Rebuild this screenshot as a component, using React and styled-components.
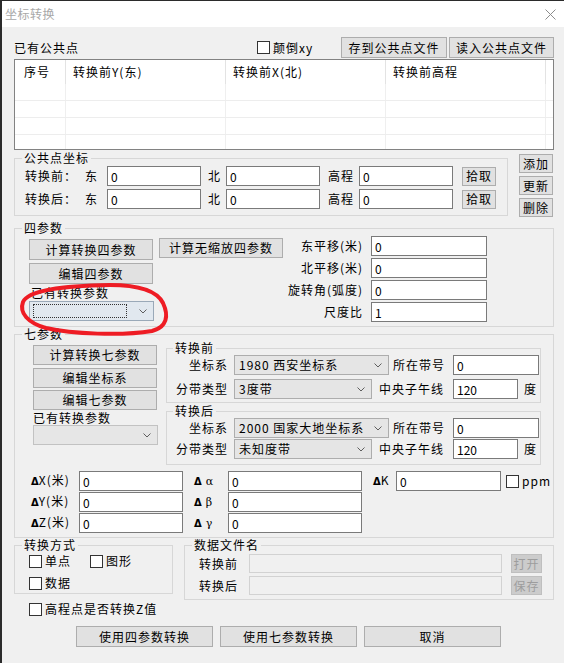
import React from "react";
import styled, { createGlobalStyle } from "styled-components";

const GlobalStyle = createGlobalStyle`
  html, body { margin: 0; padding: 0; background: #f0f0f0; }
  body {
    font-family: "Noto Sans CJK SC", "Noto Sans", sans-serif;
    font-size: 12px;
    line-height: 14px;
    letter-spacing: 1px;
    color: #000;
  }
  * { box-sizing: border-box; }
`;

const Window = styled.div`
  position: relative;
  width: 564px;
  height: 663px;
  background: #f0f0f0;
  border-top: 1px solid #2b2b2b;
  border-left: 2px solid #2b2b2b;
  overflow: hidden;
`;

const TitleBar = styled.div`
  height: 26px;
  background: #fff;
  display: flex;
  align-items: center;
  justify-content: space-between;
  padding: 0 8px 0 3px;
`;

const Title = styled.span`
  color: #a8a8a8;
  letter-spacing: 0.5px;
`;

const Body = styled.div`
  padding: 10px 10px 0 12px;
`;

const Row = styled.div`
  display: flex;
  align-items: center;
  height: ${(p) => p.$h || 20}px;
  margin-top: ${(p) => p.$mt || 0}px;
  padding-left: ${(p) => p.$pl || 0}px;
`;

const Cap = styled.span`
  flex: none;
  display: inline-block;
  width: ${(p) => (p.$w ? `${p.$w}px` : "auto")};
  margin-left: ${(p) => p.$ml || 0}px;
  text-align: ${(p) => (p.$right ? "right" : "left")};
  white-space: nowrap;
`;

const Button = styled.button`
  flex: none;
  width: ${(p) => p.$w}px;
  height: ${(p) => p.$h || 20}px;
  margin: ${(p) => p.$mt || 0}px 0 0 ${(p) => p.$ml || 0}px;
  padding: 0;
  font: inherit;
  letter-spacing: inherit;
  color: #000;
  background: #e1e1e1;
  border: 1px solid #adadad;
  &:disabled {
    background: #cccccc;
    border-color: #bfbfbf;
    color: #9d9d9d;
  }
`;

const Edit = styled.input`
  flex: none;
  width: ${(p) => p.$w}px;
  height: ${(p) => p.$h || 20}px;
  margin: 0 0 0 ${(p) => p.$ml || 0}px;
  padding: 0 3px;
  font: inherit;
  letter-spacing: 0;
  color: #000;
  background: #fff;
  border: 1px solid #7a7a7a;
  outline: none;
  &:disabled {
    background: #f0f0f0;
    border-color: #d2d2d2;
  }
`;

const ComboBox = styled.div`
  flex: none;
  width: ${(p) => p.$w}px;
  height: 20px;
  margin-left: ${(p) => p.$ml || 0}px;
  display: flex;
  align-items: center;
  justify-content: space-between;
  padding: 0 6px 0 ${(p) => (p.$focus ? 3 : 4)}px;
  background: ${(p) => (p.$focus ? "#e1e8ef" : p.$dim ? "#e6e6e6" : "#e5e5e5")};
  border: 1px solid ${(p) => (p.$focus ? "#9aa9b8" : p.$dim ? "#c2c2c2" : "#adadad")};
  white-space: nowrap;
  overflow: hidden;
`;

const FocusRing = styled.span`
  flex: 1;
  height: 14px;
  margin-right: 12px;
  border: 1px dotted #333;
`;

const CheckItem = styled.span`
  flex: none;
  display: inline-flex;
  align-items: center;
  width: ${(p) => (p.$w ? `${p.$w}px` : "auto")};
  margin-left: ${(p) => p.$ml || 0}px;
  white-space: nowrap;
`;

const CheckBox = styled.span`
  flex: none;
  width: 13px;
  height: 13px;
  margin-right: 3px;
  background: #fff;
  border: 1px solid #333;
`;

const Group = styled.fieldset`
  flex: none;
  margin: ${(p) => p.$mt || 0}px 0 0 ${(p) => p.$ml || 0}px;
  padding: 0;
  min-width: 0;
  width: ${(p) => p.$w}px;
  border: 1px solid #d7d7d7;
`;

const Legend = styled.legend`
  margin-left: ${(p) => p.$ml ?? 7}px;
  padding: 0 2px;
  height: 14px;
  line-height: 14px;
`;

/* table of common points */
const PointTable = styled.div`
  margin-top: 1px;
  width: 540px;
  height: 91px;
  background: #fff;
  border: 1px solid #828282;
  display: flex;
  flex-direction: column;
`;

const TableRow = styled.div`
  display: grid;
  grid-template-columns: 51px 160px 160px 160px 1fr;
  height: ${(p) => (p.$h ? `${p.$h}px` : "auto")};
  flex: ${(p) => (p.$h ? "none" : 1)};
  border-bottom: ${(p) => (p.$line ? "1px solid #ededed" : "none")};
`;

const TCell = styled.div`
  display: flex;
  align-items: center;
  padding-left: ${(p) => p.$pad ?? 7}px;
  border-right: 1px solid ${(p) => (p.$head ? "#e3e3e3" : "#efefef")};
  white-space: nowrap;
  &:last-child { border-right: none; }
`;

const PubRow = styled.div`
  display: flex;
  align-items: flex-start;
  margin-top: 1px;
`;

const PubInner = styled.div`
  display: flex;
  flex-direction: column;
  gap: 3px;
  padding: 1px 0 6px 10px;
`;

const SideButtons = styled.div`
  display: flex;
  flex-direction: column;
  gap: 3px;
  margin: 3px 0 0 11px;
`;

const FourInner = styled.div`
  display: flex;
  align-items: flex-start;
  padding: 1px 0 4px 14px;
`;

const Column = styled.div`
  flex: none;
  display: flex;
  flex-direction: column;
  width: ${(p) => p.$w}px;
  margin: ${(p) => p.$mt || 0}px 0 0 ${(p) => p.$ml || 0}px;
`;

const Stack = styled.div`
  display: flex;
  flex-direction: column;
  gap: ${(p) => p.$gap || 0}px;
`;

const SmallCap = styled.div`
  height: ${(p) => p.$h || 14}px;
  line-height: ${(p) => p.$h || 14}px;
  margin: ${(p) => p.$mt || 0}px 0 ${(p) => p.$mb || 0}px ${(p) => p.$ml || 0}px;
  white-space: nowrap;
`;

const ParamGrid = styled.div`
  flex: none;
  display: grid;
  grid-template-columns: 80px 116px;
  grid-auto-rows: 20px;
  column-gap: 8px;
  row-gap: 2px;
  align-items: center;
  & > span { text-align: right; }
`;

const SevenTop = styled.div`
  display: flex;
  align-items: flex-start;
`;

const SysInner = styled.div`
  display: flex;
  flex-direction: column;
  gap: ${(p) => p.$gap}px;
  padding: 0 0 ${(p) => p.$pb || 0}px 1px;
`;

const DeltaGrid = styled.div`
  display: grid;
  grid-template-columns: 48px 104px 45px 134px 34px 105px auto;
  grid-auto-rows: 20px;
  row-gap: 1px;
  align-items: center;
  margin: 6px 0 0 16px;
  padding-bottom: 4px;
`;

const DeltaCap = styled.span`
  grid-column: ${(p) => (p.$first ? 1 : "auto")};
  padding-left: ${(p) => p.$pl || 0}px;
  white-space: nowrap;
`;

const Tri = styled.span`
  font-family: "DejaVu Sans", sans-serif;
  font-weight: bold;
  font-size: 10px;
  letter-spacing: 0;
  margin-right: ${(p) => p.$gap || 0}px;
`;

const Greek = styled.span`
  font-family: "DejaVu Serif", serif;
  font-size: 11px;
`;

const BottomRow = styled.div`
  display: flex;
  align-items: flex-start;
`;

const ModeInner = styled.div`
  padding: 1px 0 2px 14px;
`;

const FileInner = styled.div`
  display: flex;
  flex-direction: column;
  gap: 3px;
  padding: 1px 0 4px 0;
`;

const ActionBar = styled.div`
  display: flex;
  gap: 7px;
  margin-top: 9px;
  padding-left: 62px;
`;

const Marker = styled.svg`
  position: absolute;
  left: -2px;
  top: -1px;
  pointer-events: none;
`;

function Chevron() {
  return (
    <svg width="8" height="5" viewBox="0 0 8 5">
      <polyline points="0.5,0.5 4,4 7.5,0.5" fill="none" stroke="#5e5e5e" />
    </svg>
  );
}

function Combo({ w, ml, focus, dim, children }) {
  return (
    <ComboBox $w={w} $ml={ml} $focus={focus} $dim={dim}>
      {focus ? <FocusRing /> : <span>{children}</span>}
      <Chevron />
    </ComboBox>
  );
}

function Check({ w, ml, children }) {
  return (
    <CheckItem $w={w} $ml={ml}>
      <CheckBox />
      {children}
    </CheckItem>
  );
}

function CloseIcon() {
  return (
    <svg width="11" height="11" viewBox="0 0 11 11">
      <path d="M0.5 0.5L10.5 10.5M10.5 0.5L0.5 10.5" stroke="#8c8c8c" strokeWidth="1" />
    </svg>
  );
}

function SysGroup({ title, mt, system, zone, gap, pb }) {
  return (
    <Group $w={375} $mt={mt}>
      <Legend $ml={6}>{title}</Legend>
      <SysInner $gap={gap} $pb={pb}>
        <Row $h={20}>
          <Cap $w={60} $right>坐标系</Cap>
          <Combo w={155} ml={6}>{system}</Combo>
          <Cap $w={52} $ml={4}>所在带号</Cap>
          <Edit $w={86} $ml={8} defaultValue="0" />
        </Row>
        <Row $h={20}>
          <Cap $w={60} $right>分带类型</Cap>
          <Combo w={138} ml={6}>{zone}</Combo>
          <Cap $w={65} $ml={7}>中央子午线</Cap>
          <Edit $w={65} $ml={9} defaultValue="120" />
          <Cap $ml={6}>度</Cap>
        </Row>
      </SysInner>
    </Group>
  );
}

const columns = ["序号", "转换前Y(东)", "转换前X(北)", "转换前高程", ""];

export default function App() {
  return (
    <>
      <GlobalStyle />
      <Window>
        <TitleBar>
          <Title>坐标转换</Title>
          <CloseIcon />
        </TitleBar>
        <Body>
          <Row $h={21}>
            <Cap $w={243}>已有公共点</Cap>
            <Check w={84}>颠倒xy</Check>
            <Button $w={106} $h={21}>存到公共点文件</Button>
            <Button $w={105} $h={21} $ml={2}>读入公共点文件</Button>
          </Row>

          <PointTable>
            <TableRow $h={24}>
              {columns.map((c, i) => (
                <TCell key={i} $head $pad={i === 0 ? 9 : 7}>{c}</TCell>
              ))}
            </TableRow>
            {[0, 1, 2].map((r) => (
              <TableRow key={r} $h={17} $line>
                {columns.map((c, i) => <TCell key={i} />)}
              </TableRow>
            ))}
            <TableRow>
              {columns.map((c, i) => <TCell key={i} />)}
            </TableRow>
          </PointTable>

          <PubRow>
            <Group $w={494}>
              <Legend>公共点坐标</Legend>
              <PubInner>
                {["转换前：", "转换后："].map((label) => (
                  <Row key={label}>
                    <Cap $w={60}>{label}</Cap>
                    <Cap $w={22}>东</Cap>
                    <Edit $w={94} defaultValue="0" />
                    <Cap $w={18} $ml={7}>北</Cap>
                    <Edit $w={94} defaultValue="0" />
                    <Cap $w={31} $ml={8}>高程</Cap>
                    <Edit $w={94} defaultValue="0" />
                    <Button $w={34} $h={19} $ml={9}>拾取</Button>
                  </Row>
                ))}
              </PubInner>
            </Group>
            <SideButtons>
              <Button $w={34} $h={19}>添加</Button>
              <Button $w={34} $h={19}>更新</Button>
              <Button $w={34} $h={19}>删除</Button>
            </SideButtons>
          </PubRow>

          <Group $w={540} $mt={4}>
            <Legend>四参数</Legend>
            <FourInner>
              <Column $w={124} $mt={3}>
                <Stack $gap={3}>
                  <Button $w={124} $h={21}>计算转换四参数</Button>
                  <Button $w={124} $h={21}>编辑四参数</Button>
                </Stack>
                <SmallCap $mt={2} $mb={1} $ml={2}>已有转换参数</SmallCap>
                <Combo w={125} focus />
              </Column>
              <Column $w={124} $ml={6} $mt={2}>
                <Button $w={124}>计算无缩放四参数</Button>
              </Column>
              <ParamGrid>
                <span>东平移(米)</span>
                <Edit $w={116} defaultValue="0" />
                <span>北平移(米)</span>
                <Edit $w={116} defaultValue="0" />
                <span>旋转角(弧度)</span>
                <Edit $w={116} defaultValue="0" />
                <span>尺度比</span>
                <Edit $w={116} defaultValue="1" />
              </ParamGrid>
            </FourInner>
          </Group>

          <Group $w={540}>
            <Legend>七参数</Legend>
            <SevenTop>
              <Column $w={124} $ml={18} $mt={4}>
                <Stack $gap={3}>
                  <Button $w={124}>计算转换七参数</Button>
                  <Button $w={124}>编辑坐标系</Button>
                </Stack>
                <Button $w={124} $mt={2}>编辑七参数</Button>
                <SmallCap $h={12} $mt={2} $mb={1}>已有转换参数</SmallCap>
                <Combo w={125} dim />
              </Column>
              <Column $w={375} $ml={9}>
                <SysGroup title="转换前" system="1980 西安坐标系" zone="3度带" gap={4} pb={3} />
                <SysGroup title="转换后" mt={1} system="2000 国家大地坐标系" zone="未知度带" gap={1} pb={5} />
              </Column>
            </SevenTop>
            <DeltaGrid>
              <DeltaCap $first><Tri>Δ</Tri>X(米)</DeltaCap>
              <Edit $w={104} defaultValue="0" />
              <DeltaCap $pl={11}><Tri $gap={4}>Δ</Tri><Greek>α</Greek></DeltaCap>
              <Edit $w={134} defaultValue="0" />
              <DeltaCap $pl={11}><Tri>Δ</Tri>K</DeltaCap>
              <Edit $w={105} defaultValue="0" />
              <Check ml={5}>ppm</Check>
              <DeltaCap $first><Tri>Δ</Tri>Y(米)</DeltaCap>
              <Edit $w={104} defaultValue="0" />
              <DeltaCap $pl={11}><Tri $gap={4}>Δ</Tri><Greek>β</Greek></DeltaCap>
              <Edit $w={134} defaultValue="0" />
              <DeltaCap $first><Tri>Δ</Tri>Z(米)</DeltaCap>
              <Edit $w={104} defaultValue="0" />
              <DeltaCap $pl={11}><Tri $gap={4}>Δ</Tri><Greek>γ</Greek></DeltaCap>
              <Edit $w={134} defaultValue="0" />
            </DeltaGrid>
          </Group>

          <BottomRow>
            <Group $w={159}>
              <Legend>转换方式</Legend>
              <ModeInner>
                <Row $h={16}>
                  <Check w={61}>单点</Check>
                  <Check>图形</Check>
                </Row>
                <Row $h={16} $mt={6}>
                  <Check>数据</Check>
                </Row>
              </ModeInner>
            </Group>
            <Group $w={370} $ml={11}>
              <Legend>数据文件名</Legend>
              <FileInner>
                <Row $h={19} $mt={1}>
                  <Cap $w={50} $ml={14}>转换前</Cap>
                  <Edit $w={253} $h={19} disabled />
                  <Button $w={31} $h={19} $ml={9} disabled>打开</Button>
                </Row>
                <Row $h={19}>
                  <Cap $w={50} $ml={14}>转换后</Cap>
                  <Edit $w={253} $h={19} disabled />
                  <Button $w={31} $h={19} $ml={9} disabled>保存</Button>
                </Row>
              </FileInner>
            </Group>
          </BottomRow>

          <Row $h={16} $mt={1} $pl={15}>
            <Check>高程点是否转换Z值</Check>
          </Row>

          <ActionBar>
            <Button $w={137} $h={21}>使用四参数转换</Button>
            <Button $w={137} $h={21}>使用七参数转换</Button>
            <Button $w={137} $h={21}>取消</Button>
          </ActionBar>
        </Body>

        <Marker width="564" height="663" viewBox="0 0 564 663">
          <path
            d="M23 302 C28 290 62 286 110 285 C140 285 157 291 163 303 C169 316 167 327 152 331 C122 336 72 334 46 328 C28 323 19 313 23 302 Z"
            fill="none"
            stroke="#ee1c24"
            strokeWidth="4"
            strokeLinecap="round"
          />
        </Marker>
      </Window>
    </>
  );
}
